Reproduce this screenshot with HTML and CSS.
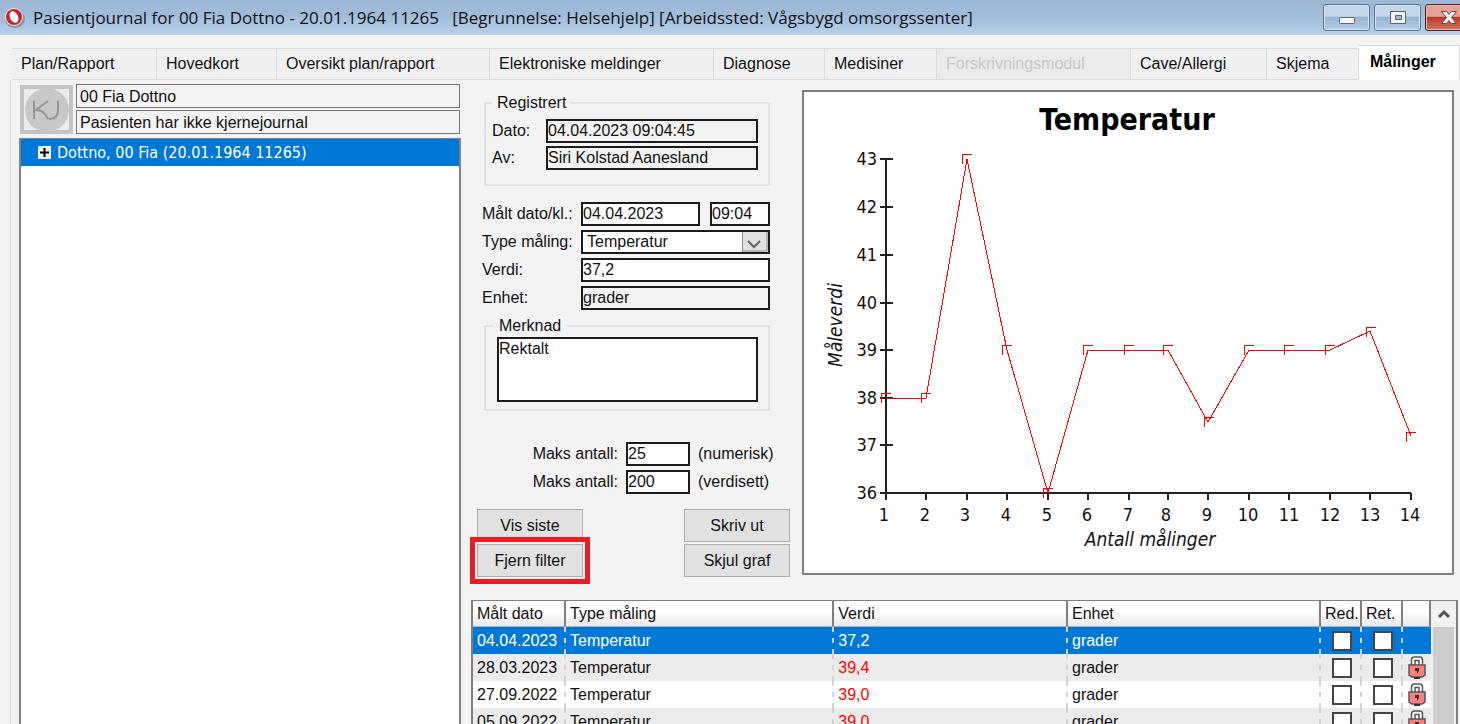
FILE: index.html
```html
<!DOCTYPE html>
<html lang="no">
<head>
<meta charset="utf-8">
<meta name="viewport" content="width=device-width, initial-scale=1">
<title>Pasientjournal</title>
<link rel="stylesheet" href="styles.css">
</head>
<body>
<div class="window">
  <header class="titlebar">
    <svg class="app-icon" viewBox="0 0 22 22" aria-hidden="true">
      <ellipse cx="11" cy="12" rx="10" ry="9" fill="#8b8f98"/>
      <circle cx="10" cy="10" r="9" fill="#f3eeee"/>
      <circle cx="10" cy="10" r="8" fill="#c3262b"/>
      <ellipse cx="10" cy="10" rx="4" ry="6" fill="#fff" transform="rotate(-25 10 10)"/>
    </svg>
    <h1 class="title">Pasientjournal for 00 Fia Dottno - 20.01.1964 11265 &nbsp; [Begrunnelse: Helsehjelp] [Arbeidssted: Vågsbygd omsorgssenter]</h1>
    <div class="window-buttons">
      <button class="win-btn" type="button" aria-label="Minimer">
        <svg width="18" height="18" viewBox="0 0 18 18"><rect x="1.500" y="8.500" width="15" height="6" rx="1" fill="#f4f4f4" stroke="#5a6473"/></svg>
      </button>
      <button class="win-btn" type="button" aria-label="Maksimer">
        <svg width="18" height="18" viewBox="0 0 18 18"><path d="M1.500 2.500h15v12h-15z" fill="#f4f4f4" stroke="#5a6473"/><path d="M6.500 6.500h6v4h-6z" fill="#9fbad8" stroke="#5a6473"/></svg>
      </button>
      <button class="win-btn win-close" type="button" aria-label="Lukk">
        <svg width="18" height="18" viewBox="0 0 18 18"><path d="M1.500 2.500h5l2.500 3 2.500-3h5l-5 6 5 6h-5l-2.500-3-2.500 3h-5l5-6z" fill="#f4f4f4" stroke="#6b4450"/></svg>
      </button>
    </div>
  </header>

  <nav class="tabs" role="tablist">
    <button class="tab" role="tab" type="button">Plan/Rapport</button>
    <button class="tab" role="tab" type="button">Hovedkort</button>
    <button class="tab" role="tab" type="button">Oversikt plan/rapport</button>
    <button class="tab" role="tab" type="button">Elektroniske meldinger</button>
    <button class="tab" role="tab" type="button">Diagnose</button>
    <button class="tab" role="tab" type="button">Medisiner</button>
    <button class="tab" role="tab" type="button" disabled>Forskrivningsmodul</button>
    <button class="tab" role="tab" type="button">Cave/Allergi</button>
    <button class="tab" role="tab" type="button">Skjema</button>
    <button class="tab tab-active" role="tab" type="button" aria-selected="true">Målinger</button>
  </nav>

  <main class="page">
    <aside class="sidebar">
      <div class="patient">
        <svg class="kj" viewBox="0 0 53 49" aria-label="Kjernejournal">
          <path d="M0 0h53v49H0z" fill="#c3c3c3"/>
          <path d="M4 4h45v41H4z" fill="#ececec"/>
          <circle cx="27" cy="25" r="22" fill="#c8c8c8"/>
          <path d="M14 16v18M28 16L16 25q8 0 12 9M38 16v9q0 9-9 9" fill="none" stroke="#969696" stroke-width="2"/>
        </svg>
        <div class="patient-fields">
          <input class="patient-field" type="text" readonly aria-label="Pasient" value="00 Fia Dottno">
          <input class="patient-field" type="text" readonly aria-label="Kjernejournal" value="Pasienten har ikke kjernejournal">
        </div>
      </div>
      <div class="tree" role="tree">
        <div class="tree-item" role="treeitem" aria-selected="true">
          <svg width="13" height="13" viewBox="0 0 13 13" aria-hidden="true"><path d="M0 0h13v13H0z" fill="#f1f1f1"/><path d="M2 6.500h9M6.500 2v9" stroke="#000" stroke-width="2"/></svg>
          <span>Dottno, 00 Fia (20.01.1964 11265)</span>
        </div>
      </div>
    </aside>

    <section class="content">
      <div class="upper">
        <form class="form">
          <fieldset class="group reg-group">
            <legend>Registrert</legend>
            <div class="reg-grid">
              <label for="regdate">Dato:</label>
              <input class="field readonly" id="regdate" type="text" readonly value="04.04.2023 09:04:45">
              <label for="regby">Av:</label>
              <input class="field readonly" id="regby" type="text" readonly value="Siri Kolstad Aanesland">
            </div>
          </fieldset>

          <div class="main-grid">
            <label for="mdate">Målt dato/kl.:</label>
            <div class="datetime">
              <input class="field" id="mdate" type="text" value="04.04.2023">
              <input class="field" type="text" aria-label="Klokkeslett" value="09:04">
            </div>
            <label for="mtype">Type måling:</label>
            <div class="select-wrap">
              <select class="field select" id="mtype"><option>Temperatur</option></select>
              <svg class="select-arrow" viewBox="0 0 26 20" aria-hidden="true"><path d="M0 0h26v20H0z" fill="#e1e1e1"/><path d="M.5 0v20M25 0v19H1" fill="none" stroke="#8c8c8c"/><path d="M6 9l6 6 6-6" fill="none" stroke="#666" stroke-width="2"/></svg>
            </div>
            <label for="mvalue">Verdi:</label>
            <input class="field" id="mvalue" type="text" value="37,2">
            <label for="munit">Enhet:</label>
            <input class="field readonly" id="munit" type="text" readonly value="grader">
          </div>

          <fieldset class="group note-group">
            <legend>Merknad</legend>
            <textarea class="field note" aria-label="Merknad">Rektalt</textarea>
          </fieldset>

          <div class="limits">
            <label for="max1">Maks antall:</label>
            <input class="field" id="max1" type="text" value="25">
            <span>(numerisk)</span>
            <label for="max2">Maks antall:</label>
            <input class="field" id="max2" type="text" value="200">
            <span>(verdisett)</span>
          </div>

          <div class="actions">
            <button class="btn" type="button">Vis siste</button>
            <button class="btn" type="button">Skriv ut</button>
            <button class="btn btn-marked" type="button">Fjern filter</button>
            <button class="btn" type="button">Skjul graf</button>
          </div>
        </form>

        <figure class="chart">
          <svg viewBox="2 2 648 481" role="img" aria-label="Temperatur">
            <text class="chart-title" x="325" y="40">Temperatur</text>
            <g class="axis">
              <path d="M84 69V403H609"/>
              <path d="M78 69h13M78 117h13M78 165h13M78 213h13M78 260h13M78 308h13M78 355h13M78 403h6"/>
              <path d="M84 403v7M124 403v7M165 403v7M205 403v7M246 403v7M286 403v7M327 403v7M366 403v7M406 403v7M447 403v7M487 403v7M528 403v7M568 403v7M609 403v7"/>
            </g>
            <g class="y-labels">
              <text x="75" y="75">43</text><text x="75" y="123">42</text><text x="75" y="171">41</text><text x="75" y="219">40</text>
              <text x="75" y="266">39</text><text x="75" y="314">38</text><text x="75" y="361">37</text><text x="75" y="409">36</text>
            </g>
            <g class="x-labels">
              <text x="82" y="431">1</text><text x="123" y="431">2</text><text x="163" y="431">3</text><text x="204" y="431">4</text>
              <text x="245" y="431">5</text><text x="285" y="431">6</text><text x="326" y="431">7</text><text x="364" y="431">8</text>
              <text x="405" y="431">9</text><text x="446" y="431">10</text><text x="487" y="431">11</text><text x="528" y="431">12</text>
              <text x="568" y="431">13</text><text x="608" y="431">14</text>
            </g>
            <text class="axis-title" x="348" y="456">Antall målinger</text>
            <text class="axis-title" transform="translate(40 235) rotate(-90)">Måleverdi</text>
            <g class="series">
              <path d="M84 308H124L165 69L205 260L246 403L286 260H366L406 332L447 260H528L568 241L609 346"/>
              <path d="M79 313v-10h10M119 313v-10h10M160 74v-10h10M200 265v-10h10M241 408v-10h10M281 265v-10h10M322 265v-10h10M361 265v-10h10M402 337v-10h10M442 265v-10h10M482 265v-10h10M523 265v-10h10M564 247v-10h10M604 352v-10h10"/>
            </g>
          </svg>
        </figure>
      </div>

      <div class="grid-box">
        <table class="grid">
          <colgroup><col class="c-date"><col class="c-type"><col class="c-value"><col><col class="c-check"><col class="c-check"><col class="c-lock"></colgroup>
          <thead>
            <tr><th>Målt dato</th><th>Type måling</th><th>Verdi</th><th>Enhet</th><th>Red.</th><th>Ret.</th><th></th></tr>
          </thead>
          <tbody>
            <tr class="selected"><td>04.04.2023</td><td>Temperatur</td><td>37,2</td><td>grader</td><td><input class="check" type="checkbox" aria-label="Red."></td><td><input class="check" type="checkbox" aria-label="Ret."></td><td></td></tr>
            <tr><td>28.03.2023</td><td>Temperatur</td><td class="high">39,4</td><td>grader</td><td><input class="check" type="checkbox" aria-label="Red."></td><td><input class="check" type="checkbox" aria-label="Ret."></td><td class="lock-cell"><svg class="lock" viewBox="0 0 20 25"><use href="#lock"/></svg></td></tr>
            <tr><td>27.09.2022</td><td>Temperatur</td><td class="high">39,0</td><td>grader</td><td><input class="check" type="checkbox" aria-label="Red."></td><td><input class="check" type="checkbox" aria-label="Ret."></td><td class="lock-cell"><svg class="lock" viewBox="0 0 20 25"><use href="#lock"/></svg></td></tr>
            <tr><td>05.09.2022</td><td>Temperatur</td><td class="high">39,0</td><td>grader</td><td><input class="check" type="checkbox" aria-label="Red."></td><td><input class="check" type="checkbox" aria-label="Ret."></td><td class="lock-cell"><svg class="lock" viewBox="0 0 20 25"><use href="#lock"/></svg></td></tr>
          </tbody>
        </table>
        <div class="scrollbar">
          <button class="scroll-up" type="button" aria-label="Rull opp"><svg width="14" height="12" viewBox="0 0 14 12"><path d="M2 9l5-5 5 5" fill="none" stroke="#505050" stroke-width="3"/></svg></button>
          <div class="scroll-thumb"></div>
        </div>
      </div>
    </section>
  </main>
</div>
<svg class="defs" width="0" height="0" aria-hidden="true">
  <symbol id="lock" viewBox="0 0 20 25">
    <path d="M4.500 10V5q0-3 3-3h5q3 0 3 3v5M8 10V5.500h4V10" fill="#fff" stroke="#555" stroke-width="1.500"/>
    <path d="M2 10h16v10l-3 2H5l-3-2z" fill="#ff7f7f" stroke="#555" stroke-width="1.500"/>
    <path d="M7 23h6" stroke="#333" stroke-width="2"/>
    <path d="M8 13h4v3l-2 3v-3H8z" fill="#333"/>
  </symbol>
</svg>
</body>
</html>
```
FILE: styles.css
```css
* { box-sizing: border-box; }

body {
  margin: 0;
  overflow: hidden;
  background: #f3f3f3;
  color: #111;
  font: 16px/20px "Liberation Sans", Arial, sans-serif;
}

button, input, select, textarea { font: inherit; color: inherit; }

.window {
  display: flex;
  flex-direction: column;
  height: 100vh;
}

/* Title bar */
.titlebar {
  display: flex;
  align-items: center;
  gap: 7px;
  flex: none;
  height: 35px;
  padding-left: 4px;
  background: linear-gradient(#9cb8d6, #a0bbd9 40%, #b7d0ea);
}
.app-icon { width: 22px; height: 22px; flex: none; }
.title {
  flex: 1;
  min-width: 0;
  margin: 0;
  overflow: hidden;
  white-space: pre;
  font: 17px/24px "Open Sans", "Noto Sans", sans-serif;
}
.window-buttons {
  display: flex;
  gap: 4px;
  align-self: flex-start;
  margin: 4px -12px 0 0;
}
.win-btn {
  display: flex;
  align-items: center;
  justify-content: center;
  width: 47px;
  height: 27px;
  padding: 0;
  border: 1px solid #5f7590;
  border-radius: 3px;
  background: linear-gradient(#c4d6e9 45%, #98b3d0 50%, #b5cfe8);
  box-shadow: inset 0 0 0 1px #d5e4f2;
}
.win-close {
  border-color: #4f1f28;
  background: linear-gradient(#e5a196 45%, #bb3a26 50%, #d2765f);
  box-shadow: inset 0 0 0 1px #e9b3aa;
}

/* Tabs */
.tabs {
  display: grid;
  grid-template-columns: 145fr 120fr 213fr 224fr 111fr 112fr 194fr 136fr 92fr 101fr;
  align-items: end;
  flex: none;
  height: 45px;
  padding-left: 12px;
}
.tab {
  height: 32px;
  padding: 0 9px;
  border: 1px solid #d9d9d9;
  border-left-width: 0;
  background: #f0f0f0;
  text-align: left;
  white-space: nowrap;
}
.tab:disabled { background: #ebebeb; color: #c6c6c6; }
.tab-active {
  height: 35px;
  padding: 0 11px 3px;
  border-bottom: 0;
  background: #fff;
  color: #000;
  font-weight: bold;
}

/* Page */
.page {
  display: flex;
  flex: 1;
  gap: 10px;
  min-height: 0;
  margin-left: 10px;
  padding: 4px 2px 0 8px;
  border-left: 1px solid #dcdcdc;
}
.sidebar {
  display: flex;
  flex-direction: column;
  gap: 4px;
  width: 442px;
  flex: none;
}
.patient { display: flex; gap: 3px; padding: 0 1px; }
.kj { width: 53px; height: 49px; flex: none; margin-top: 1px; }
.patient-fields { display: grid; flex: 1; gap: 2px; }
.patient-field {
  width: 100%;
  height: 24px;
  padding: 2px 3px 0;
  border: 1px solid #777;
  background: #f3f3f3;
}
.tree {
  flex: 1;
  border: 2px solid #808080;
  border-bottom: 0;
  border-top-width: 1px;
  background: #fff;
}
.tree-item {
  display: flex;
  align-items: center;
  gap: 6px;
  height: 27px;
  padding-left: 17px;
  background: #0078d7;
  color: #fff;
  font: 16px/20px "DejaVu Sans Condensed", "Noto Sans", sans-serif;
}

/* Content */
.content {
  display: flex;
  flex-direction: column;
  flex: 1;
  gap: 23px;
  min-width: 0;
}
.upper { display: flex; gap: 12px; padding: 6px 4px 0 0; }
.form { width: 319px; flex: none; padding-top: 3px; }

.group {
  min-width: 0;
  margin: 0 20px 0 13px;
  border: 2px solid #e2e2e2;
}
.group legend { padding: 0 5px; }
.reg-group { padding: 6px 10px 14px 6px; }
.reg-grid {
  display: grid;
  grid-template-columns: 54px 1fr;
  row-gap: 3px;
  align-items: center;
}
.field {
  width: 100%;
  min-width: 0;
  height: 24px;
  margin: 0;
  padding: 0 0 1px;
  border: 2px solid #1c1c1c;
  border-radius: 0;
  background: #fff;
}
.readonly { background: #f3f3f3; }

.main-grid {
  display: grid;
  grid-template-columns: 99px 1fr;
  row-gap: 4px;
  align-items: center;
  margin: 16px 20px 0 11px;
}
.main-grid label { white-space: nowrap; }
.datetime { display: grid; grid-template-columns: 119fr 60fr; gap: 10px; }
.select-wrap { position: relative; display: flex; }
.select { appearance: none; padding-left: 4px; }
.select-arrow {
  position: absolute;
  top: 2px;
  right: 2px;
  width: 26px;
  height: 20px;
  pointer-events: none;
}
.note-group { margin-top: 6px; padding: 1px 10px 7px 11px; }
.note-group legend { margin-left: -3px; }
.note { display: block; height: 65px; resize: none; line-height: 20px; }

.limits {
  display: grid;
  grid-template-columns: auto 64px 84px;
  gap: 4px 8px;
  align-items: center;
  justify-content: end;
  margin: 31px 8px 0 0;
}
.actions {
  display: grid;
  grid-template-columns: 106px 106px;
  justify-content: space-between;
  gap: 2px;
  margin: 15px 0 0 6px;
}
.btn {
  height: 33px;
  padding: 0;
  border: 1px solid #adadad;
  background: #e1e1e1;
}
.btn-marked { outline: 5px solid #ed1c24; outline-offset: 2px; }

/* Chart */
.chart {
  flex: 1;
  align-self: flex-start;
  min-width: 0;
  margin: 0;
  border: 2px solid #808080;
  background: #fff;
}
.chart svg { display: block; width: 100%; height: auto; }
.chart text { font: 18px "DejaVu Sans Condensed", "Noto Sans", sans-serif; fill: #111; }
.chart .chart-title { font-size: 30px; font-weight: bold; text-anchor: middle; fill: #000; }
.y-labels { text-anchor: end; }
.x-labels { text-anchor: middle; }
.chart .axis-title { font-size: 19px; font-style: italic; text-anchor: middle; }
.axis { fill: none; stroke: #222; stroke-width: 2; shape-rendering: crispEdges; }
.series { fill: none; stroke: #f00; stroke-width: 1; shape-rendering: crispEdges; }

/* Measurement table */
.grid-box {
  display: flex;
  align-items: stretch;
  flex: 1;
  min-height: 0;
  overflow: hidden;
  border: 2px solid #808080;
  border-bottom: 0;
  border-top-width: 1px;
  background: #fff;
}
.grid {
  flex: 1;
  align-self: flex-start;
  width: 100%;
  table-layout: fixed;
  border-collapse: separate;
  border-spacing: 0;
}
.c-date { width: 93px; }
.c-type { width: 28%; }
.c-value { width: 24.4%; }
.c-check { width: 41px; }
.c-lock { width: 28px; }
.grid th {
  height: 26px;
  padding: 0 0 0 4px;
  border-right: 2px solid #808080;
  border-bottom: 1px solid #b0b0b0;
  background: linear-gradient(#fff 40%, #e9e9e9);
  font-weight: normal;
  text-align: left;
  white-space: nowrap;
}
.grid td {
  height: 27px;
  padding: 0 4px;
  white-space: nowrap;
  background: repeating-linear-gradient(#d2d2d2 0 5px, transparent 5px 11px) right top / 2px 100% no-repeat;
}
.grid td:last-child { background: none; }
.grid tr:nth-child(even) { background: #ebebeb; }
.grid .selected { background: #0078d7; color: #fff; }
.grid .high { color: #f00; }
.check {
  display: block;
  appearance: none;
  width: 20px;
  height: 20px;
  margin: 0 auto;
  border: 2px solid #444;
  background: #fff;
}
.grid .lock-cell { padding: 0; background: #fff; }
.lock { display: block; width: 20px; height: 25px; margin: 0 auto; }

.scrollbar { width: 25px; flex: none; background: #f0f0f0; }
.scroll-up {
  display: flex;
  align-items: center;
  justify-content: center;
  width: 100%;
  height: 26px;
  padding: 0;
  border: 0;
  background: #f0f0f0;
}
.scroll-thumb { height: 100%; margin: 0 2px; background: #cdcdcd; }
.defs { position: absolute; }
```
